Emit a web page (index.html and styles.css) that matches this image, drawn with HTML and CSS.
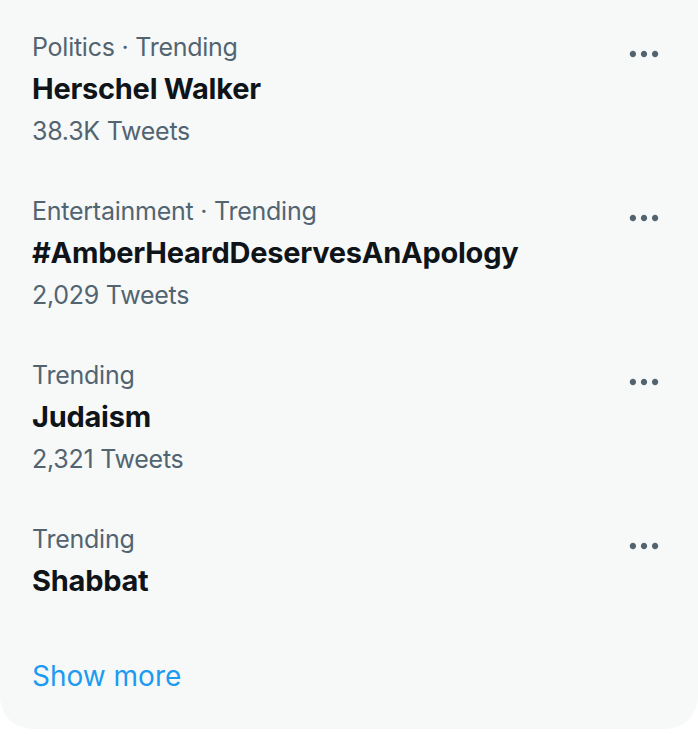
FILE: index.html
```html
<!DOCTYPE html>
<html lang="en">
<head>
<meta charset="utf-8">
<title>Trends</title>
<link rel="stylesheet" href="styles.css">
</head>
<body>
<section class="card">
  <div class="trend">
    <div class="trend-text">
      <div class="meta">Politics · Trending</div>
      <div class="title">Herschel Walker</div>
      <div class="count">38.3K Tweets</div>
    </div>
    <button class="more" aria-label="More">
      <svg viewBox="0 0 24 24"><path d="M3 12c0-1.1.9-2 2-2s2 .9 2 2-.9 2-2 2-2-.9-2-2zm9 2c1.1 0 2-.9 2-2s-.9-2-2-2-2 .9-2 2 .9 2 2 2zm7 0c1.1 0 2-.9 2-2s-.9-2-2-2-2 .9-2 2 .9 2 2 2z"/></svg>
    </button>
  </div>
  <div class="trend">
    <div class="trend-text">
      <div class="meta">Entertainment · Trending</div>
      <div class="title">#AmberHeardDeservesAnApology</div>
      <div class="count">2,029 Tweets</div>
    </div>
    <button class="more" aria-label="More">
      <svg viewBox="0 0 24 24"><path d="M3 12c0-1.1.9-2 2-2s2 .9 2 2-.9 2-2 2-2-.9-2-2zm9 2c1.1 0 2-.9 2-2s-.9-2-2-2-2 .9-2 2 .9 2 2 2zm7 0c1.1 0 2-.9 2-2s-.9-2-2-2-2 .9-2 2 .9 2 2 2z"/></svg>
    </button>
  </div>
  <div class="trend">
    <div class="trend-text">
      <div class="meta">Trending</div>
      <div class="title">Judaism</div>
      <div class="count">2,321 Tweets</div>
    </div>
    <button class="more" aria-label="More">
      <svg viewBox="0 0 24 24"><path d="M3 12c0-1.1.9-2 2-2s2 .9 2 2-.9 2-2 2-2-.9-2-2zm9 2c1.1 0 2-.9 2-2s-.9-2-2-2-2 .9-2 2 .9 2 2 2zm7 0c1.1 0 2-.9 2-2s-.9-2-2-2-2 .9-2 2 .9 2 2 2z"/></svg>
    </button>
  </div>
  <div class="trend">
    <div class="trend-text">
      <div class="meta">Trending</div>
      <div class="title">Shabbat</div>
    </div>
    <button class="more" aria-label="More">
      <svg viewBox="0 0 24 24"><path d="M3 12c0-1.1.9-2 2-2s2 .9 2 2-.9 2-2 2-2-.9-2-2zm9 2c1.1 0 2-.9 2-2s-.9-2-2-2-2 .9-2 2 .9 2 2 2zm7 0c1.1 0 2-.9 2-2s-.9-2-2-2-2 .9-2 2 .9 2 2 2z"/></svg>
    </button>
  </div>
  <a class="show-more" href="#">Show more</a>
</section>
</body>
</html>
```

FILE: styles.css
```css
html, body {
  margin: 0;
  padding: 0;
  background: #ffffff;
}

body {
  font-family: Inter, "Noto Sans", "Liberation Sans", sans-serif;
  width: 698px;
  height: 734px;
  overflow: hidden;
}

.card {
  background: #f7f9f9;
  width: 698px;
  padding-top: 7px;
  border-radius: 0 0 32px 32px;
  display: flex;
  flex-direction: column;
}

.trend {
  display: flex;
  justify-content: space-between;
  align-items: flex-start;
  padding: 24px 32px;
}

.trend-text {
  display: flex;
  flex-direction: column;
}

.meta,
.count {
  font-size: 25px;
  line-height: 32px;
  color: #536471;
  letter-spacing: -0.25px;
}

.title {
  font-size: 29px;
  line-height: 40px;
  font-weight: 700;
  color: #0f1419;
  padding-top: 6px;
  letter-spacing: -0.25px;
}

.count {
  margin-top: 6px;
}

.more {
  background: none;
  border: 0;
  padding: 0;
  margin: 4px 3px 0 0;
  width: 38px;
  height: 38px;
  display: flex;
}

.more svg {
  width: 38px;
  height: 38px;
  fill: #536471;
}

.show-more {
  display: block;
  padding: 31px 32px 33px;
  font-size: 28px;
  line-height: 40px;
  color: #1d9bf0;
  text-decoration: none;
}
```
